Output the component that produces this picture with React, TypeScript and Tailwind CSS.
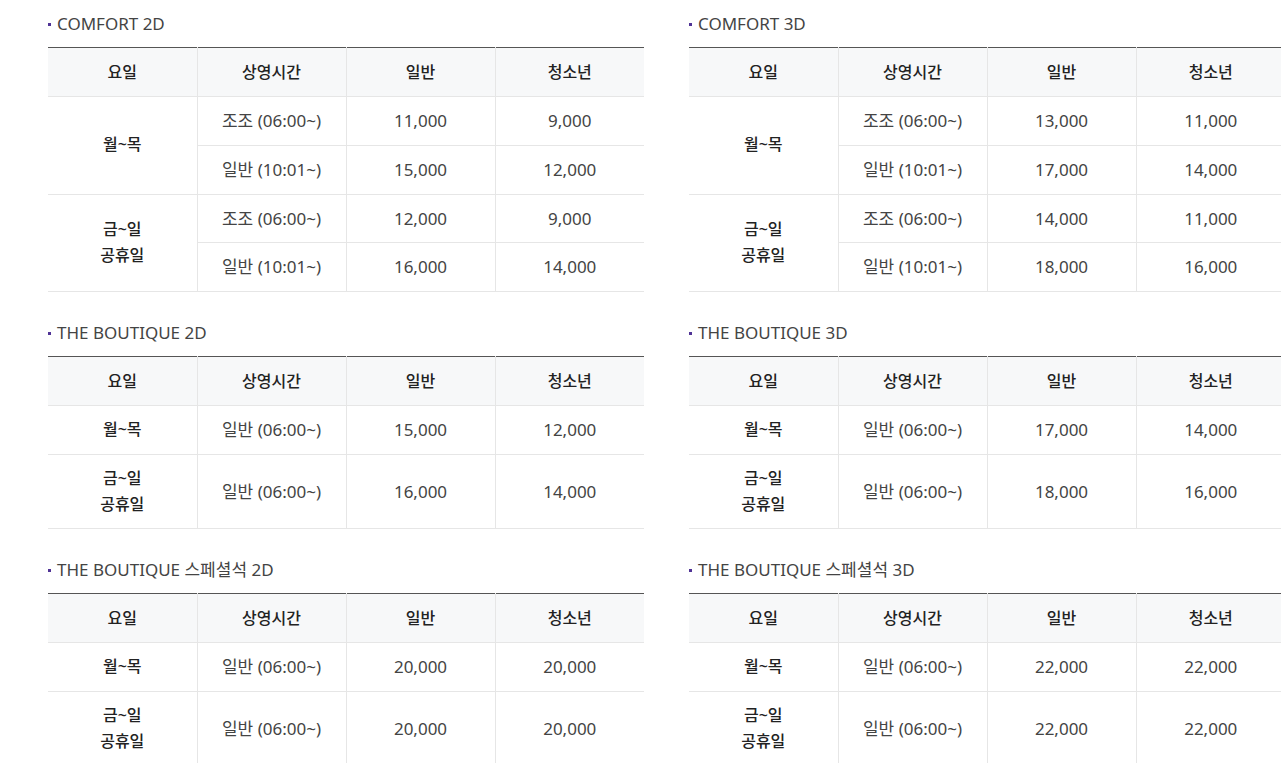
type Row = { day?: string[]; span?: number; time: string; adult: string; youth: string };
type Section = { title: string; rows: Row[] };

const left: Section[] = [
  {
    title: "COMFORT 2D",
    rows: [
      { day: ["월~목"], span: 2, time: "조조 (06:00~)", adult: "11,000", youth: "9,000" },
      { time: "일반 (10:01~)", adult: "15,000", youth: "12,000" },
      { day: ["금~일", "공휴일"], span: 2, time: "조조 (06:00~)", adult: "12,000", youth: "9,000" },
      { time: "일반 (10:01~)", adult: "16,000", youth: "14,000" },
    ],
  },
  {
    title: "THE BOUTIQUE 2D",
    rows: [
      { day: ["월~목"], time: "일반 (06:00~)", adult: "15,000", youth: "12,000" },
      { day: ["금~일", "공휴일"], time: "일반 (06:00~)", adult: "16,000", youth: "14,000" },
    ],
  },
  {
    title: "THE BOUTIQUE 스페셜석 2D",
    rows: [
      { day: ["월~목"], time: "일반 (06:00~)", adult: "20,000", youth: "20,000" },
      { day: ["금~일", "공휴일"], time: "일반 (06:00~)", adult: "20,000", youth: "20,000" },
    ],
  },
];

const right: Section[] = [
  {
    title: "COMFORT 3D",
    rows: [
      { day: ["월~목"], span: 2, time: "조조 (06:00~)", adult: "13,000", youth: "11,000" },
      { time: "일반 (10:01~)", adult: "17,000", youth: "14,000" },
      { day: ["금~일", "공휴일"], span: 2, time: "조조 (06:00~)", adult: "14,000", youth: "11,000" },
      { time: "일반 (10:01~)", adult: "18,000", youth: "16,000" },
    ],
  },
  {
    title: "THE BOUTIQUE 3D",
    rows: [
      { day: ["월~목"], time: "일반 (06:00~)", adult: "17,000", youth: "14,000" },
      { day: ["금~일", "공휴일"], time: "일반 (06:00~)", adult: "18,000", youth: "16,000" },
    ],
  },
  {
    title: "THE BOUTIQUE 스페셜석 3D",
    rows: [
      { day: ["월~목"], time: "일반 (06:00~)", adult: "22,000", youth: "22,000" },
      { day: ["금~일", "공휴일"], time: "일반 (06:00~)", adult: "22,000", youth: "22,000" },
    ],
  },
];

function PriceTable({ section, first }: { section: Section; first?: boolean }) {
  const cell = "border-b border-l border-[#e6e6e6] py-[11px] text-center align-middle";
  const head = "border-b border-l border-[#e6e6e6] py-[11px] text-center align-middle font-medium text-[16px] leading-[26px]";
  return (
    <div className={first ? "" : "mt-[17px]"}>
      <h3 className="flex items-center pt-[12px] pb-[11px] text-[17px] leading-6 text-[#444]">
        <span className="mr-[6px] h-[3px] w-[3px] bg-[#503396]" />
        {section.title}
      </h3>
      <table className="w-[596px] table-fixed border-collapse border-t border-[#555] leading-[25.75px] text-[17px] text-[#444]">
        <thead>
          <tr className="bg-[#f7f8f9] text-[#222]">
            <th className={head + " border-l-0"}>요일</th>
            <th className={head}>상영시간</th>
            <th className={head}>일반</th>
            <th className={head}>청소년</th>
          </tr>
        </thead>
        <tbody>
          {section.rows.map((r, i) => (
            <tr key={i}>
              {r.day && (
                <td rowSpan={r.span ?? 1} className={cell + " border-l-0 text-[16px] font-medium text-[#222]"}>
                  {r.day.map((d) => (
                    <div key={d}>{d}</div>
                  ))}
                </td>
              )}
              <td className={cell}>{r.time}</td>
              <td className={cell}>{r.adult}</td>
              <td className={cell}>{r.youth}</td>
            </tr>
          ))}
        </tbody>
      </table>
    </div>
  );
}

export default function App() {
  return (
    <div
      className="h-screen w-screen overflow-hidden bg-white"
      style={{ fontFamily: '"Noto Sans", "Noto Sans CJK KR", sans-serif' }}
    >
      <div className="flex w-[1300px] gap-[45px] pl-[48px]">
        <div className="flex flex-col">
          {left.map((s, i) => (
            <PriceTable key={s.title} section={s} first={i === 0} />
          ))}
        </div>
        <div className="flex flex-col">
          {right.map((s, i) => (
            <PriceTable key={s.title} section={s} first={i === 0} />
          ))}
        </div>
      </div>
    </div>
  );
}
